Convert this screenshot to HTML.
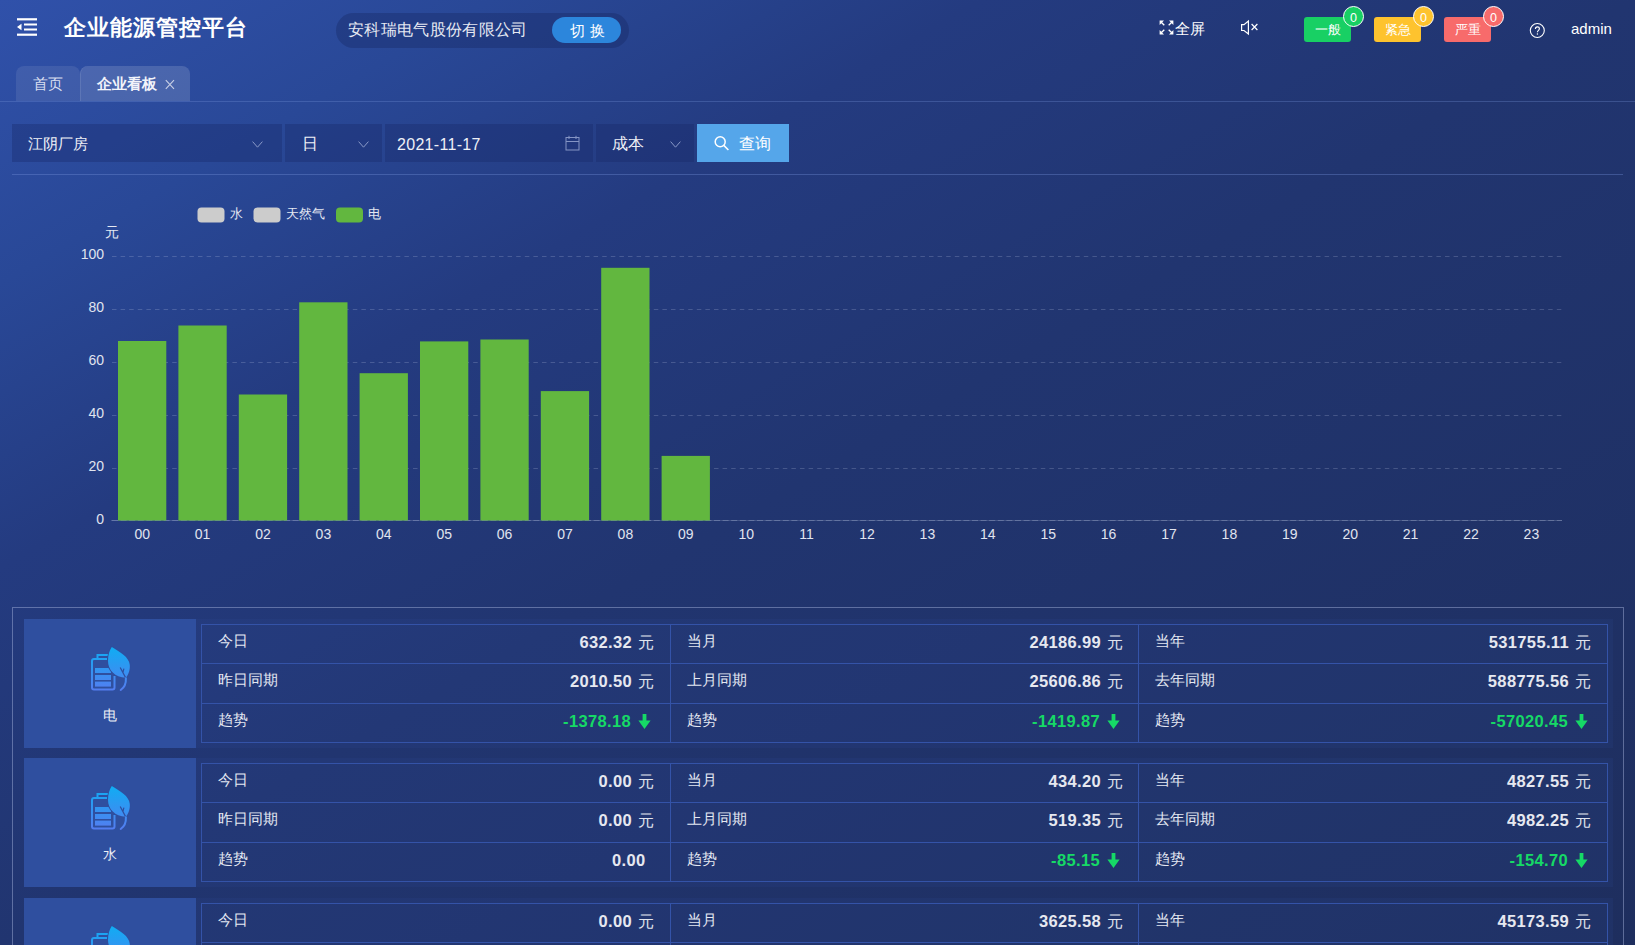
<!DOCTYPE html>
<html><head><meta charset="utf-8">
<style>
*{box-sizing:border-box;margin:0;padding:0}
html,body{width:1635px;height:945px;overflow:hidden}
body{font-family:"Liberation Sans",sans-serif;color:#e6e9f2;position:relative;
background:linear-gradient(to bottom right,#3051aa 0%,#294897 15%,#243b80 30%,#213570 50%,#1e2e5e 100%);}
.abs{position:absolute}
/* header */
.title{left:64px;top:14.5px;font-size:22px;line-height:26px;font-weight:900;color:#fff;letter-spacing:1px;white-space:nowrap}
.pill{left:336px;top:13px;width:293px;height:35px;border-radius:17.5px;background:rgba(22,38,98,0.36)}
.co{left:348px;top:20px;font-size:16px;line-height:20px;color:#e6e9f2;white-space:nowrap;letter-spacing:0.35px}
.sw{left:552px;top:17px;width:69px;height:26px;border-radius:13px;background:#2c86dc}
.swt{left:570px;top:20.5px;font-size:14.5px;line-height:20px;color:#fff}
.hdt{color:#fff;font-size:15px;line-height:20px;white-space:nowrap}
.badge{top:17px;width:47px;height:25px;border-radius:3px;color:#fff;font-size:13px;text-align:center;line-height:25px}
.cnt{top:6px;width:21px;height:21px;border-radius:50%;border:1px solid #fff;color:#fff;font-size:12.5px;text-align:center;line-height:23px}
/* tabs */
.tab{top:66px;height:35px;border-radius:8px 8px 0 0;background:rgba(255,255,255,0.085)}
.tabt{top:74px;font-size:15px;line-height:20px;color:#d8def0;white-space:nowrap}
.hline{left:0;top:101px;width:1635px;height:1px;background:rgba(120,150,220,0.30)}
/* filters */
.sel{top:124px;height:38px;background:rgba(22,38,100,0.32)}
.selt{top:134px;font-size:16px;line-height:20px;color:#eef0f6;white-space:nowrap}
.chev{top:141px;width:11px;height:7px;fill:none;stroke:#8a9ac8;stroke-width:1}
.btn{left:697px;top:124px;width:92px;height:38px;background:#55a6ea}
.btnt{left:739px;top:134px;font-size:16px;line-height:20px;color:#fff}
.fline{left:12px;top:174px;width:1611px;height:1px;background:rgba(120,150,220,0.35)}

.yl{font-size:14px;fill:#e0e4ef}
.xl{font-size:14px;fill:#e0e4ef}
.lg{font-size:13px;fill:#e4e8f2}
.panel{left:12px;top:607px;width:1612px;height:400px;border:1px solid rgba(170,185,225,0.45)}
.rowc{left:24px;width:1589px;height:129px;background:rgba(60,90,180,0.10)}
.iconb{left:24px;width:172px;height:129px;background:#2f4f9f}
.iname{left:24px;width:172px;text-align:center;font-size:14px;color:#eef0f6;line-height:20px}
.hl{left:201px;width:1407px;height:1px;background:#3453a8}
.vl{width:1px;height:119px;background:#3453a8}
.cell{width:469px;height:39px}
.lab{position:absolute;left:17px;top:8px;font-size:15px;line-height:18px;color:#e4e8f2;white-space:nowrap}
.val{position:absolute;right:16.5px;top:8px;white-space:nowrap;font-size:16.5px;line-height:20px;letter-spacing:0.35px}
.b{font-weight:bold;color:#e6e8f0}
.g{font-weight:bold;color:#16d966}
.u{font-size:16px;color:#e0e4ee;margin-left:5.5px;letter-spacing:0;position:relative;top:-0.5px}
.arr{margin-left:7px;margin-right:2.5px;display:inline-block;vertical-align:-2px;letter-spacing:0}
.nou{display:inline-block;width:8px}
</style></head><body>

<!-- header -->
<svg class="abs" style="left:17px;top:17px" width="22" height="20" viewBox="0 0 22 20"><rect x="0" y="1.2" width="20" height="2.2" fill="#fff"/><rect x="7" y="6.5" width="13" height="2" fill="#fff"/><rect x="7" y="11.5" width="13" height="2" fill="#fff"/><rect x="0" y="16.6" width="20" height="2.2" fill="#fff"/><path d="M0 10 L4.5 6.8 L4.5 13.2 Z" fill="#fff"/></svg>
<div class="abs title">企业能源管控平台</div>
<div class="abs pill"></div>
<div class="abs co">安科瑞电气股份有限公司</div>
<div class="abs sw"></div>
<div class="abs swt">切</div><div class="abs swt" style="left:590px">换</div>

<svg class="abs" style="left:1159px;top:20px" width="16" height="16" viewBox="0 0 16 16" fill="#fff" stroke="#fff" stroke-width="1.3">
<path d="M5.3 5.3 L2.2 2.2"/><path d="M0.6 0.6 H5 L0.6 5 Z" stroke="none"/>
<path d="M9.7 5.3 L12.8 2.2"/><path d="M14.4 0.6 H10 L14.4 5 Z" stroke="none"/>
<path d="M5.3 9.7 L2.2 12.8"/><path d="M0.6 14.4 H5 L0.6 10 Z" stroke="none"/>
<path d="M9.7 9.7 L12.8 12.8"/><path d="M14.4 14.4 H10 L14.4 10 Z" stroke="none"/>
</svg>
<div class="abs hdt" style="left:1175px;top:18.5px">全屏</div>
<svg class="abs" style="left:1240px;top:19px" width="20" height="17" viewBox="0 0 20 17" fill="none" stroke="#fff" stroke-width="1.2">
<path d="M1.6 5.6 H4 L8.4 2 V15 L4 11.5 H1.6 Z"/><path d="M11.6 5 L17.4 11 M17.4 5 L11.6 11"/>
</svg>
<div class="abs badge" style="left:1304px;background:#18d064">一般</div>
<div class="abs cnt" style="left:1343px;background:#18d064">0</div>
<div class="abs badge" style="left:1374px;background:#fec32e">紧急</div>
<div class="abs cnt" style="left:1413px;background:#fec32e">0</div>
<div class="abs badge" style="left:1444px;background:#f76b6b">严重</div>
<div class="abs cnt" style="left:1483px;background:#f76b6b">0</div>
<svg class="abs" style="left:1529px;top:22px" width="17" height="17" viewBox="0 0 17 17"><circle cx="8.3" cy="8.5" r="7" fill="none" stroke="#fff" stroke-width="1.1"/><path d="M6.4 7 C6.4 5.7 7.3 4.9 8.4 4.9 C9.5 4.9 10.4 5.7 10.4 6.8 C10.4 8.3 8.4 8.5 8.4 10.3" fill="none" stroke="#fff" stroke-width="1.1"/><circle cx="8.4" cy="12" r="0.7" fill="#fff"/></svg>
<div class="abs hdt" style="left:1571px;top:19px;font-size:15px">admin</div>

<!-- tabs -->
<div class="abs tab" style="left:16px;width:64px"></div>
<div class="abs tab" style="left:80px;width:110px;background:rgba(255,255,255,0.145);border-left:1px solid rgba(255,255,255,0.1)"></div>
<div class="abs tabt" style="left:33px">首页</div>
<div class="abs tabt" style="left:97px;font-weight:bold;color:#f2f4fa">企业看板</div>
<svg class="abs" style="left:165px;top:79px" width="10" height="11" viewBox="0 0 10 11"><path d="M0.8 1.2 L9 9.8 M9 1.2 L0.8 9.8" stroke="#c9d0e6" stroke-width="1.1"/></svg>
<div class="abs hline"></div>

<!-- filters -->
<div class="abs sel" style="left:12px;width:270px"></div>
<div class="abs selt" style="left:28px;font-size:15px;top:133.5px">江阴厂房</div>
<svg class="abs chev" style="left:252px"><path d="M0.6 0.6 L5.5 6.2 L10.4 0.6"/></svg>
<div class="abs sel" style="left:285px;width:97px"></div>
<div class="abs selt" style="left:302px">日</div>
<svg class="abs chev" style="left:358px"><path d="M0.6 0.6 L5.5 6.2 L10.4 0.6"/></svg>
<div class="abs sel" style="left:385px;width:208px"></div>
<div class="abs selt" style="left:397px;font-size:16px;top:135px;letter-spacing:0.3px">2021-11-17</div>
<svg class="abs" style="left:565px;top:135px" width="15" height="16" viewBox="0 0 15 16" fill="none" stroke="#8494c4" stroke-width="1"><rect x="1" y="2.5" width="13" height="12.5"/><path d="M1 6.5 H14 M4 0.8 V4 M11 0.8 V4"/></svg>
<div class="abs sel" style="left:596px;width:98px"></div>
<div class="abs selt" style="left:612px">成本</div>
<svg class="abs chev" style="left:670px"><path d="M0.6 0.6 L5.5 6.2 L10.4 0.6"/></svg>
<div class="abs btn"></div>
<svg class="abs" style="left:714px;top:135px" width="16" height="16" viewBox="0 0 16 16" fill="none" stroke="#fff" stroke-width="1.5"><circle cx="6.2" cy="6.7" r="5"/><path d="M9.8 10.4 L14.4 15"/></svg>
<div class="abs btnt">查询</div>
<div class="abs fline"></div>

<svg class="abs" style="left:0;top:0" width="1635" height="600" viewBox="0 0 1635 600">
<line x1="112" y1="256.5" x2="1562" y2="256.5" stroke="rgba(200,210,235,0.22)" stroke-width="1" stroke-dasharray="4.5 4.1"/>
<line x1="112" y1="309.5" x2="1562" y2="309.5" stroke="rgba(200,210,235,0.22)" stroke-width="1" stroke-dasharray="4.5 4.1"/>
<line x1="112" y1="362.5" x2="1562" y2="362.5" stroke="rgba(200,210,235,0.22)" stroke-width="1" stroke-dasharray="4.5 4.1"/>
<line x1="112" y1="415.5" x2="1562" y2="415.5" stroke="rgba(200,210,235,0.22)" stroke-width="1" stroke-dasharray="4.5 4.1"/>
<line x1="112" y1="468.5" x2="1562" y2="468.5" stroke="rgba(200,210,235,0.22)" stroke-width="1" stroke-dasharray="4.5 4.1"/>
<line x1="111" y1="520.5" x2="1562" y2="520.5" stroke="rgba(200,210,235,0.2)" stroke-width="1"/>
<line x1="112" y1="520.5" x2="1562" y2="520.5" stroke="rgba(200,210,235,0.25)" stroke-width="1" stroke-dasharray="6 2.6"/>
<rect x="118.0" y="341.0" width="48.3" height="179.5" fill="#62b73f"/>
<rect x="178.4" y="325.5" width="48.3" height="195.0" fill="#62b73f"/>
<rect x="238.8" y="394.5" width="48.3" height="126.0" fill="#62b73f"/>
<rect x="299.2" y="302.3" width="48.3" height="218.2" fill="#62b73f"/>
<rect x="359.6" y="373.2" width="48.3" height="147.3" fill="#62b73f"/>
<rect x="420.0" y="341.4" width="48.3" height="179.1" fill="#62b73f"/>
<rect x="480.4" y="339.5" width="48.3" height="181.0" fill="#62b73f"/>
<rect x="540.8" y="391.1" width="48.3" height="129.4" fill="#62b73f"/>
<rect x="601.2" y="267.8" width="48.3" height="252.7" fill="#62b73f"/>
<rect x="661.6" y="455.9" width="48.3" height="64.6" fill="#62b73f"/>
<text x="104" y="258.5" text-anchor="end" class="yl">100</text>
<text x="104" y="311.5" text-anchor="end" class="yl">80</text>
<text x="104" y="364.5" text-anchor="end" class="yl">60</text>
<text x="104" y="417.5" text-anchor="end" class="yl">40</text>
<text x="104" y="470.5" text-anchor="end" class="yl">20</text>
<text x="104" y="523.5" text-anchor="end" class="yl">0</text>
<text x="142.2" y="539" text-anchor="middle" class="xl">00</text>
<text x="202.6" y="539" text-anchor="middle" class="xl">01</text>
<text x="263.0" y="539" text-anchor="middle" class="xl">02</text>
<text x="323.4" y="539" text-anchor="middle" class="xl">03</text>
<text x="383.8" y="539" text-anchor="middle" class="xl">04</text>
<text x="444.2" y="539" text-anchor="middle" class="xl">05</text>
<text x="504.6" y="539" text-anchor="middle" class="xl">06</text>
<text x="565.0" y="539" text-anchor="middle" class="xl">07</text>
<text x="625.4" y="539" text-anchor="middle" class="xl">08</text>
<text x="685.8" y="539" text-anchor="middle" class="xl">09</text>
<text x="746.2" y="539" text-anchor="middle" class="xl">10</text>
<text x="806.6" y="539" text-anchor="middle" class="xl">11</text>
<text x="867.0" y="539" text-anchor="middle" class="xl">12</text>
<text x="927.4" y="539" text-anchor="middle" class="xl">13</text>
<text x="987.8" y="539" text-anchor="middle" class="xl">14</text>
<text x="1048.2" y="539" text-anchor="middle" class="xl">15</text>
<text x="1108.6" y="539" text-anchor="middle" class="xl">16</text>
<text x="1169.0" y="539" text-anchor="middle" class="xl">17</text>
<text x="1229.4" y="539" text-anchor="middle" class="xl">18</text>
<text x="1289.8" y="539" text-anchor="middle" class="xl">19</text>
<text x="1350.2" y="539" text-anchor="middle" class="xl">20</text>
<text x="1410.6" y="539" text-anchor="middle" class="xl">21</text>
<text x="1471.0" y="539" text-anchor="middle" class="xl">22</text>
<text x="1531.4" y="539" text-anchor="middle" class="xl">23</text>
<rect x="197.5" y="207.5" width="27" height="15" rx="4" fill="#cccccc"/>
<text x="229.5" y="218" class="lg">水</text>
<rect x="253.5" y="207.5" width="27" height="15" rx="4" fill="#cccccc"/>
<text x="285.5" y="218" class="lg">天然气</text>
<rect x="336" y="207.5" width="27" height="15" rx="4" fill="#62b73f"/>
<text x="367.5" y="218" class="lg">电</text>
<text x="105" y="236.5" class="lg" style="font-size:14px">元</text>
</svg>
<div class="abs panel"></div>
<div class="abs rowc" style="top:619px"></div>
<div class="abs iconb" style="top:619px"></div>
<svg class="abs" style="left:85px;top:640px" width="50" height="55" viewBox="0 0 50 55">
<defs><linearGradient id="g0" gradientUnits="userSpaceOnUse" x1="0" y1="7" x2="0" y2="51"><stop offset="0" stop-color="#0fadf3"/><stop offset="1" stop-color="#557cf0"/></linearGradient></defs>
<g fill="none" stroke="url(#g0)" stroke-width="2">
<path d="M12.5 18.5 V15 H23.5"/>
<path d="M22 19 H9 Q7 19 7 21 V47.5 Q7 49.5 9 49.5 H27.5 Q29.5 49.5 29.5 47.5 V36"/>
</g>
<g fill="url(#g0)">
<rect x="10" y="28" width="16" height="5"/><rect x="10" y="35" width="16" height="5"/><rect x="10" y="41.6" width="16" height="5"/>
</g>
<path d="M26.8 7 C24.5 10.5 23 15 23 21 C23 30 30 37.3 40.8 37.8 C44.3 33.5 45.2 28.5 44.7 24.5 C43.8 17 35.5 12.5 26.8 7 Z" fill="url(#g0)" stroke="#2f4f9f" stroke-width="1.8"/>
<path d="M26.8 7 C24.5 10.5 23 15 23 21 C23 30 30 37.3 40.8 37.8 C44.3 33.5 45.2 28.5 44.7 24.5 C43.8 17 35.5 12.5 26.8 7 Z" fill="url(#g0)"/>
<path d="M40.6 37.6 L35.2 27.5 M37.9 32.5 L38.9 28.6" fill="none" stroke="#2f4f9f" stroke-width="1.2"/>
<path d="M40.9 38.2 C41.2 43.5 39.2 47.5 35.7 50" fill="none" stroke="url(#g0)" stroke-width="2" stroke-linecap="round"/>
</svg>
<div class="abs iname" style="top:704.5px">电</div>
<div class="abs hl" style="top:624px"></div>
<div class="abs hl" style="top:663px"></div>
<div class="abs hl" style="top:703px"></div>
<div class="abs hl" style="top:742px"></div>
<div class="abs vl" style="left:201px;top:624px"></div>
<div class="abs vl" style="left:670px;top:624px"></div>
<div class="abs vl" style="left:1138px;top:624px"></div>
<div class="abs vl" style="left:1607px;top:624px"></div>
<div class="abs cell" style="left:201px;top:624px"><span class="lab">今日</span><span class="val"><span class="b">632.32</span><span class="u">元</span></span></div>
<div class="abs cell" style="left:201px;top:663px"><span class="lab">昨日同期</span><span class="val"><span class="b">2010.50</span><span class="u">元</span></span></div>
<div class="abs cell" style="left:201px;top:703px"><span class="lab">趋势</span><span class="val"><span class="g">-1378.18</span><span class="arr"><svg width="13" height="15" viewBox="0 0 13 15"><path d="M4.6 0 H8.4 V6.6 H12.6 L6.5 15 L0.4 6.6 H4.6 Z" fill="#16d966"/></svg></span></span></div>
<div class="abs cell" style="left:670px;top:624px"><span class="lab">当月</span><span class="val"><span class="b">24186.99</span><span class="u">元</span></span></div>
<div class="abs cell" style="left:670px;top:663px"><span class="lab">上月同期</span><span class="val"><span class="b">25606.86</span><span class="u">元</span></span></div>
<div class="abs cell" style="left:670px;top:703px"><span class="lab">趋势</span><span class="val"><span class="g">-1419.87</span><span class="arr"><svg width="13" height="15" viewBox="0 0 13 15"><path d="M4.6 0 H8.4 V6.6 H12.6 L6.5 15 L0.4 6.6 H4.6 Z" fill="#16d966"/></svg></span></span></div>
<div class="abs cell" style="left:1138px;top:624px"><span class="lab">当年</span><span class="val"><span class="b">531755.11</span><span class="u">元</span></span></div>
<div class="abs cell" style="left:1138px;top:663px"><span class="lab">去年同期</span><span class="val"><span class="b">588775.56</span><span class="u">元</span></span></div>
<div class="abs cell" style="left:1138px;top:703px"><span class="lab">趋势</span><span class="val"><span class="g">-57020.45</span><span class="arr"><svg width="13" height="15" viewBox="0 0 13 15"><path d="M4.6 0 H8.4 V6.6 H12.6 L6.5 15 L0.4 6.6 H4.6 Z" fill="#16d966"/></svg></span></span></div>
<div class="abs rowc" style="top:758px"></div>
<div class="abs iconb" style="top:758px"></div>
<svg class="abs" style="left:85px;top:779px" width="50" height="55" viewBox="0 0 50 55">
<defs><linearGradient id="g1" gradientUnits="userSpaceOnUse" x1="0" y1="7" x2="0" y2="51"><stop offset="0" stop-color="#0fadf3"/><stop offset="1" stop-color="#557cf0"/></linearGradient></defs>
<g fill="none" stroke="url(#g1)" stroke-width="2">
<path d="M12.5 18.5 V15 H23.5"/>
<path d="M22 19 H9 Q7 19 7 21 V47.5 Q7 49.5 9 49.5 H27.5 Q29.5 49.5 29.5 47.5 V36"/>
</g>
<g fill="url(#g1)">
<rect x="10" y="28" width="16" height="5"/><rect x="10" y="35" width="16" height="5"/><rect x="10" y="41.6" width="16" height="5"/>
</g>
<path d="M26.8 7 C24.5 10.5 23 15 23 21 C23 30 30 37.3 40.8 37.8 C44.3 33.5 45.2 28.5 44.7 24.5 C43.8 17 35.5 12.5 26.8 7 Z" fill="url(#g1)" stroke="#2f4f9f" stroke-width="1.8"/>
<path d="M26.8 7 C24.5 10.5 23 15 23 21 C23 30 30 37.3 40.8 37.8 C44.3 33.5 45.2 28.5 44.7 24.5 C43.8 17 35.5 12.5 26.8 7 Z" fill="url(#g1)"/>
<path d="M40.6 37.6 L35.2 27.5 M37.9 32.5 L38.9 28.6" fill="none" stroke="#2f4f9f" stroke-width="1.2"/>
<path d="M40.9 38.2 C41.2 43.5 39.2 47.5 35.7 50" fill="none" stroke="url(#g1)" stroke-width="2" stroke-linecap="round"/>
</svg>
<div class="abs iname" style="top:843.5px">水</div>
<div class="abs hl" style="top:763px"></div>
<div class="abs hl" style="top:802px"></div>
<div class="abs hl" style="top:842px"></div>
<div class="abs hl" style="top:881px"></div>
<div class="abs vl" style="left:201px;top:763px"></div>
<div class="abs vl" style="left:670px;top:763px"></div>
<div class="abs vl" style="left:1138px;top:763px"></div>
<div class="abs vl" style="left:1607px;top:763px"></div>
<div class="abs cell" style="left:201px;top:763px"><span class="lab">今日</span><span class="val"><span class="b">0.00</span><span class="u">元</span></span></div>
<div class="abs cell" style="left:201px;top:802px"><span class="lab">昨日同期</span><span class="val"><span class="b">0.00</span><span class="u">元</span></span></div>
<div class="abs cell" style="left:201px;top:842px"><span class="lab">趋势</span><span class="val"><span class="b">0.00</span><span class="nou"></span></span></div>
<div class="abs cell" style="left:670px;top:763px"><span class="lab">当月</span><span class="val"><span class="b">434.20</span><span class="u">元</span></span></div>
<div class="abs cell" style="left:670px;top:802px"><span class="lab">上月同期</span><span class="val"><span class="b">519.35</span><span class="u">元</span></span></div>
<div class="abs cell" style="left:670px;top:842px"><span class="lab">趋势</span><span class="val"><span class="g">-85.15</span><span class="arr"><svg width="13" height="15" viewBox="0 0 13 15"><path d="M4.6 0 H8.4 V6.6 H12.6 L6.5 15 L0.4 6.6 H4.6 Z" fill="#16d966"/></svg></span></span></div>
<div class="abs cell" style="left:1138px;top:763px"><span class="lab">当年</span><span class="val"><span class="b">4827.55</span><span class="u">元</span></span></div>
<div class="abs cell" style="left:1138px;top:802px"><span class="lab">去年同期</span><span class="val"><span class="b">4982.25</span><span class="u">元</span></span></div>
<div class="abs cell" style="left:1138px;top:842px"><span class="lab">趋势</span><span class="val"><span class="g">-154.70</span><span class="arr"><svg width="13" height="15" viewBox="0 0 13 15"><path d="M4.6 0 H8.4 V6.6 H12.6 L6.5 15 L0.4 6.6 H4.6 Z" fill="#16d966"/></svg></span></span></div>
<div class="abs rowc" style="top:898px"></div>
<div class="abs iconb" style="top:898px"></div>
<svg class="abs" style="left:85px;top:919px" width="50" height="55" viewBox="0 0 50 55">
<defs><linearGradient id="g2" gradientUnits="userSpaceOnUse" x1="0" y1="7" x2="0" y2="51"><stop offset="0" stop-color="#0fadf3"/><stop offset="1" stop-color="#557cf0"/></linearGradient></defs>
<g fill="none" stroke="url(#g2)" stroke-width="2">
<path d="M12.5 18.5 V15 H23.5"/>
<path d="M22 19 H9 Q7 19 7 21 V47.5 Q7 49.5 9 49.5 H27.5 Q29.5 49.5 29.5 47.5 V36"/>
</g>
<g fill="url(#g2)">
<rect x="10" y="28" width="16" height="5"/><rect x="10" y="35" width="16" height="5"/><rect x="10" y="41.6" width="16" height="5"/>
</g>
<path d="M26.8 7 C24.5 10.5 23 15 23 21 C23 30 30 37.3 40.8 37.8 C44.3 33.5 45.2 28.5 44.7 24.5 C43.8 17 35.5 12.5 26.8 7 Z" fill="url(#g2)" stroke="#2f4f9f" stroke-width="1.8"/>
<path d="M26.8 7 C24.5 10.5 23 15 23 21 C23 30 30 37.3 40.8 37.8 C44.3 33.5 45.2 28.5 44.7 24.5 C43.8 17 35.5 12.5 26.8 7 Z" fill="url(#g2)"/>
<path d="M40.6 37.6 L35.2 27.5 M37.9 32.5 L38.9 28.6" fill="none" stroke="#2f4f9f" stroke-width="1.2"/>
<path d="M40.9 38.2 C41.2 43.5 39.2 47.5 35.7 50" fill="none" stroke="url(#g2)" stroke-width="2" stroke-linecap="round"/>
</svg>
<div class="abs iname" style="top:983.5px">天然气</div>
<div class="abs hl" style="top:903px"></div>
<div class="abs hl" style="top:942px"></div>
<div class="abs hl" style="top:982px"></div>
<div class="abs hl" style="top:1021px"></div>
<div class="abs vl" style="left:201px;top:903px"></div>
<div class="abs vl" style="left:670px;top:903px"></div>
<div class="abs vl" style="left:1138px;top:903px"></div>
<div class="abs vl" style="left:1607px;top:903px"></div>
<div class="abs cell" style="left:201px;top:903px"><span class="lab">今日</span><span class="val"><span class="b">0.00</span><span class="u">元</span></span></div>
<div class="abs cell" style="left:201px;top:942px"><span class="lab">昨日同期</span><span class="val"><span class="b">0.00</span><span class="u">元</span></span></div>
<div class="abs cell" style="left:201px;top:982px"><span class="lab">趋势</span><span class="val"><span class="b">0.00</span><span class="nou"></span></span></div>
<div class="abs cell" style="left:670px;top:903px"><span class="lab">当月</span><span class="val"><span class="b">3625.58</span><span class="u">元</span></span></div>
<div class="abs cell" style="left:670px;top:942px"><span class="lab">上月同期</span><span class="val"><span class="b">3625.58</span><span class="u">元</span></span></div>
<div class="abs cell" style="left:670px;top:982px"><span class="lab">趋势</span><span class="val"><span class="b">0.00</span><span class="nou"></span></span></div>
<div class="abs cell" style="left:1138px;top:903px"><span class="lab">当年</span><span class="val"><span class="b">45173.59</span><span class="u">元</span></span></div>
<div class="abs cell" style="left:1138px;top:942px"><span class="lab">去年同期</span><span class="val"><span class="b">45173.59</span><span class="u">元</span></span></div>
<div class="abs cell" style="left:1138px;top:982px"><span class="lab">趋势</span><span class="val"><span class="b">0.00</span><span class="nou"></span></span></div>
</body></html>
